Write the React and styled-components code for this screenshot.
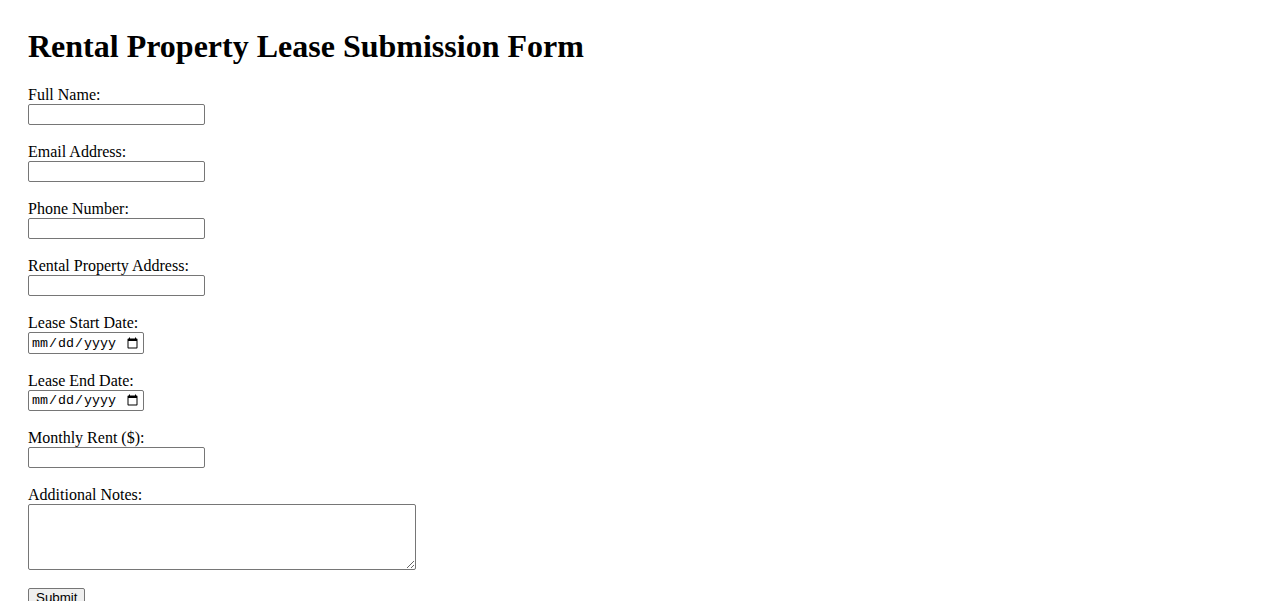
import React from "react";
import styled, { createGlobalStyle } from "styled-components";

const Global = createGlobalStyle`
  body {
    margin: 8px;
    background: #ffffff;
    color: #000000;
    font-family: "Liberation Serif", "Times New Roman", serif;
    font-size: 16px;
  }
`;

const Page = styled.div`
  padding: 20px;
`;

const Title = styled.h1`
  font-size: 32px;
  font-weight: bold;
  margin: 0 0 21.44px 0;
`;

const Form = styled.form`
  margin: 0;
`;

const Label = styled.label`
  font-family: "Liberation Serif", "Times New Roman", serif;
  font-size: 16px;
`;

const TextInput = styled.input`
  box-sizing: border-box;
  width: ${(p) => (p.type === "date" ? "116px" : "177px")};
  height: ${(p) => (p.type === "date" ? "21.5px" : "21px")};
  padding: 1px 2px;
  border: 1px solid #767676;
  border-radius: 2px;
  background: #ffffff;
  font-family: ${(p) =>
    p.type === "date"
      ? `"Liberation Mono", "DejaVu Sans Mono", monospace`
      : `"Liberation Sans", Arial, sans-serif`};
  font-size: 13.333px;
  color: #000;
`;

const NotesArea = styled.textarea`
  box-sizing: border-box;
  width: 388px;
  height: 66px;
  padding: 2px;
  border: 1px solid #767676;
  border-radius: 2px;
  font-family: "Liberation Mono", monospace;
  font-size: 13.333px;
  vertical-align: bottom;
`;

const SubmitButton = styled.button`
  font-family: "Liberation Sans", Arial, sans-serif;
  font-size: 13.333px;
  padding: 1px 7px;
  border: 1px solid #767676;
  border-radius: 2px;
  background: #efefef;
  color: #000;
`;

const fields = [
  { id: "name", label: "Full Name:", type: "text" },
  { id: "email", label: "Email Address:", type: "email" },
  { id: "phone", label: "Phone Number:", type: "tel" },
  { id: "address", label: "Rental Property Address:", type: "text" },
  { id: "start", label: "Lease Start Date:", type: "date" },
  { id: "end", label: "Lease End Date:", type: "date" },
  { id: "rent", label: "Monthly Rent ($):", type: "number" },
];

export default function App() {
  return (
    <Page>
      <Global />
      <Title>Rental Property Lease Submission Form</Title>
      <Form onSubmit={(e) => e.preventDefault()}>
        {fields.map((f) => (
          <React.Fragment key={f.id}>
            <Label htmlFor={f.id}>{f.label}</Label>
            <br />
            <TextInput id={f.id} name={f.id} type={f.type === "number" ? "text" : f.type} />
            <br />
            <br />
          </React.Fragment>
        ))}
        <Label htmlFor="notes">Additional Notes:</Label>
        <br />
        <NotesArea id="notes" name="notes" />
        <br />
        <br />
        <SubmitButton type="submit">Submit</SubmitButton>
      </Form>
    </Page>
  );
}
